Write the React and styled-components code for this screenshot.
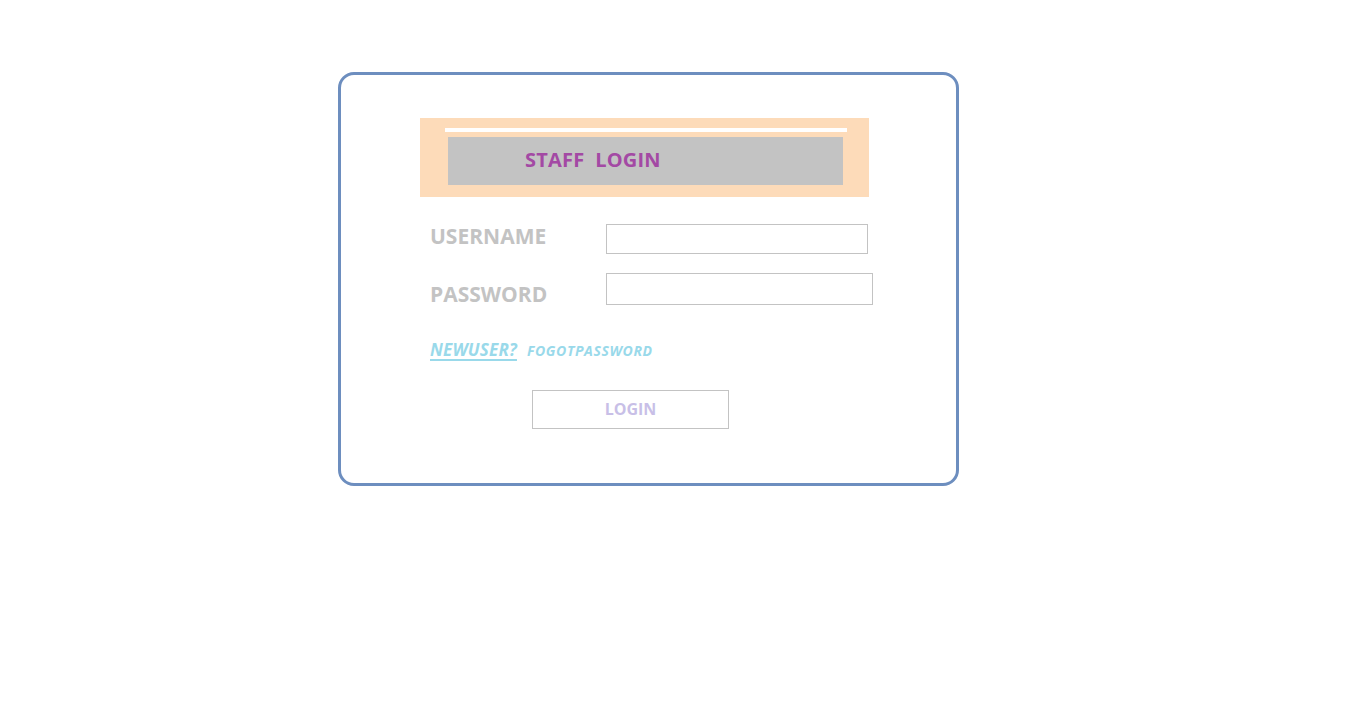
import React from 'react'
import styled, { createGlobalStyle } from 'styled-components'

const GlobalStyle = createGlobalStyle`
  body {
    margin: 0;
    background: #ffffff;
    font-family: "Open Sans", "Liberation Sans", sans-serif;
  }
`

export default function App() {
  return (
    <Page>
      <GlobalStyle />
      <Card>
        <Header>
          <HeaderLine />
          <TitleBar>STAFF&nbsp;&nbsp;LOGIN</TitleBar>
        </Header>

        <Form>
          <Label offset={-3}>USERNAME</Label>
          <Input type="text" width={262} height={30} />
          <Label offset={5}>PASSWORD</Label>
          <Input type="password" width={267} height={32} />
        </Form>

        <Links>
          <NewUser href="#">NEWUSER?</NewUser>
          <Forgot href="#">FOGOTPASSWORD</Forgot>
        </Links>

        <LoginButton>LOGIN</LoginButton>
      </Card>
    </Page>
  )
}

const Page = styled.div`
  padding: 72px 0 0 338px;
`

const Card = styled.div`
  box-sizing: border-box;
  width: 621px;
  height: 414px;
  border: 3px solid #6d8ebf;
  border-radius: 16px;
  padding: 43px 0 0 79px;
  display: flex;
  flex-direction: column;
`

const Header = styled.div`
  box-sizing: border-box;
  width: 449px;
  height: 79px;
  background-color: #fddbb9;
  padding: 10px 0 12px;
  display: flex;
  flex-direction: column;
`

const HeaderLine = styled.div`
  margin-left: 25px;
  width: 402px;
  height: 4px;
  background-color: #ffffff;
`

const TitleBar = styled.div`
  margin: 5px 0 0 28px;
  width: 395px;
  height: 48px;
  background-color: #c3c3c3;
  box-sizing: border-box;
  padding: 0 0 4px 77px;
  display: flex;
  align-items: center;
  color: #a349a4;
  font-size: 20px;
  font-weight: 700;
  letter-spacing: 0.2px;
`

const Form = styled.div`
  display: grid;
  grid-template-columns: 176px auto;
  row-gap: 19px;
  margin: 27px 0 0 10px;
  align-items: center;
`

const Label = styled.div`
  color: #c3c3c3;
  font-size: 21px;
  font-weight: 700;
  position: relative;
  top: ${p => p.offset || 0}px;
`

const Input = styled.input`
  box-sizing: border-box;
  width: ${p => p.width}px;
  height: ${p => p.height}px;
  border: 1px solid #c3c3c3;
  margin: 0;
  outline: none;
  background: #ffffff;
`

const Links = styled.div`
  display: flex;
  align-items: baseline;
  gap: 10px;
  margin: 33px 0 0 10px;
`

const NewUser = styled.a`
  color: #99d9ea;
  font-size: 17px;
  font-weight: 700;
  font-style: italic;
  text-decoration: underline;
  text-decoration-thickness: 2px;
  text-underline-offset: 3px;
  letter-spacing: 0.2px;
`

const Forgot = styled.a`
  color: #99d9ea;
  font-size: 14px;
  font-weight: 700;
  font-style: italic;
  text-decoration: none;
  letter-spacing: 0.6px;
`

const LoginButton = styled.button`
  box-sizing: border-box;
  margin: 29px 0 0 112px;
  width: 197px;
  height: 39px;
  border: 1px solid #c3c3c3;
  background: #ffffff;
  color: #c8bfe7;
  font-family: "Open Sans", "Liberation Sans", sans-serif;
  font-size: 16px;
  font-weight: 700;
  padding: 0 0 1px;
  cursor: pointer;
`
